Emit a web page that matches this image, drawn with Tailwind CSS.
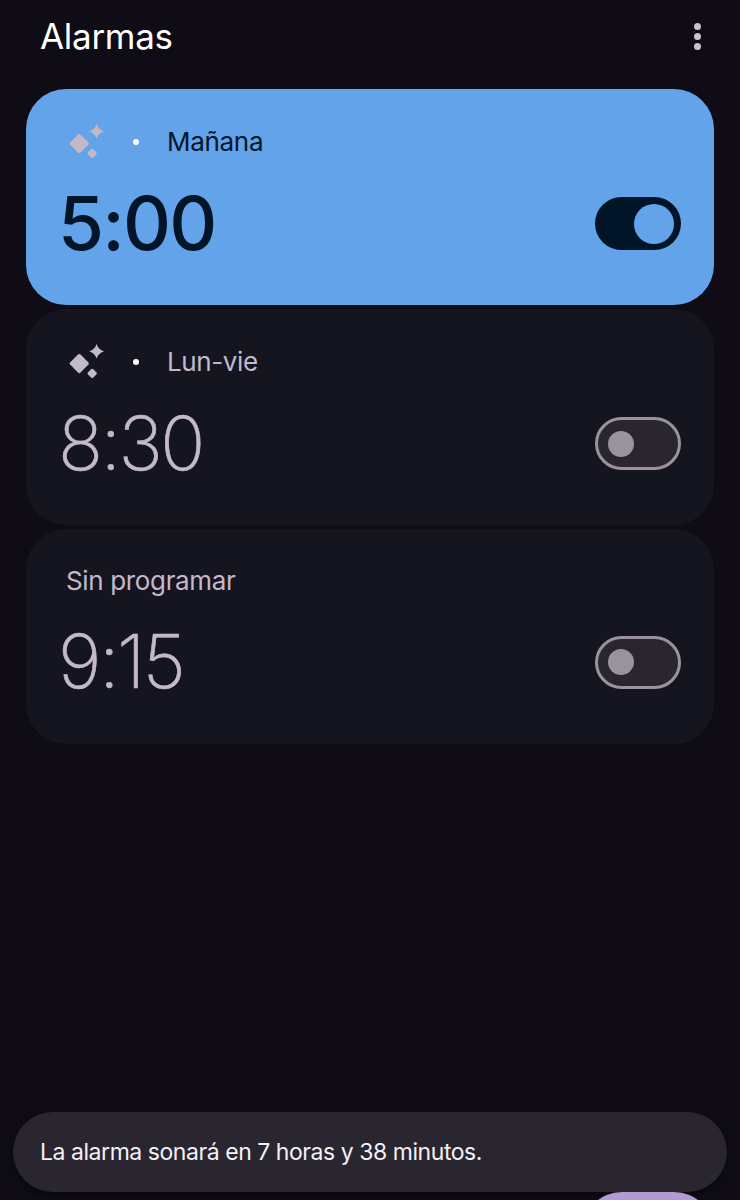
<!DOCTYPE html>
<html lang="es">
  <head>
    <meta charset="UTF-8" />
    <meta name="viewport" content="width=device-width, initial-scale=1.0" />
    <script src="https://cdn.jsdelivr.net/npm/@tailwindcss/browser@4"></script>
    <title>Alarmas</title>
  </head>
  <body
    class="relative h-screen overflow-hidden bg-[#0f0c15] font-['Inter',sans-serif]"
  >
    <header class="flex h-[89px] items-start justify-between pl-10 pr-[39.5px]">
      <h1 class="pt-4 text-[35px] leading-10 tracking-[-0.3px] text-white">
        Alarmas
      </h1>
      <button class="flex flex-col gap-[3px] pt-[23px]" aria-label="Más opciones">
        <span class="size-[7px] rounded-full bg-[#c9c2d2]"></span>
        <span class="size-[7px] rounded-full bg-[#c9c2d2]"></span>
        <span class="size-[7px] rounded-full bg-[#c9c2d2]"></span>
      </button>
    </header>

    <main class="flex flex-col gap-1 px-[26px]">
      <!-- active alarm -->
      <section
        class="flex h-[216px] flex-col rounded-[40px] bg-[#62a3ea] pt-[33px] pl-9 pr-[33px] text-[#001628]"
      >
        <div class="flex h-10 items-center">
          <svg class="ml-[7px] h-9 w-9 fill-[#c4b8c8]" viewBox="0 0 36 36">
            <rect x="3" y="12.300" width="14.500" height="14.500" rx="1.800" transform="rotate(45 10.250 19.550)" />
            <path d="M27.600 0Q29.400 5.500 35 7.300 29.400 9.100 27.600 14.600 25.800 9.100 20.200 7.300 25.800 5.500 27.600 0z" />
            <rect x="19.500" y="25.700" width="7.400" height="7.400" rx="1.600" transform="rotate(45 23.200 29.400)" />
          </svg>
          <span class="ml-7 size-[6px] rounded-full bg-white"></span>
          <span class="ml-7 text-[26px] leading-8 tracking-[-0.3px]">Mañana</span>
        </div>
        <div class="flex h-[123px] items-center justify-between">
          <time class="-mt-px -ml-1 text-[74.5px] leading-none font-medium tracking-[-1.800px]">5:00</time>
          <button
            class="flex h-[53px] w-[86px] items-center justify-end rounded-full bg-[#001628] pr-[7px]"
            role="switch"
            aria-checked="true"
          >
            <span class="size-10 rounded-full bg-[#62a3ea]"></span>
          </button>
        </div>
      </section>

      <section
        class="flex h-[216px] flex-col rounded-[40px] bg-[#15151f] pt-[33px] pl-9 pr-[33px] text-[#c4b8cc]"
      >
        <div class="flex h-10 items-center">
          <svg class="ml-[7px] h-9 w-9 fill-[#c4b8cc]" viewBox="0 0 36 36">
            <rect x="3" y="12.300" width="14.500" height="14.500" rx="1.800" transform="rotate(45 10.250 19.550)" />
            <path d="M27.600 0Q29.400 5.500 35 7.300 29.400 9.100 27.600 14.600 25.800 9.100 20.200 7.300 25.800 5.500 27.600 0z" />
            <rect x="19.500" y="25.700" width="7.400" height="7.400" rx="1.600" transform="rotate(45 23.200 29.400)" />
          </svg>
          <span class="ml-7 size-[6px] rounded-full bg-white"></span>
          <span class="ml-7 text-[26px] leading-8 tracking-[-0.4px]">Lun-vie</span>
        </div>
        <div class="flex h-[123px] items-center justify-between">
          <time class="-mt-px -ml-1 text-[74.5px] leading-none font-extralight tracking-[-2.500px] [-webkit-text-stroke:0.6px_#c4b8cc]">8:30</time>
          <button
            class="flex h-[53px] w-[86px] items-center rounded-full border-[3px] border-[#9a929f] bg-[#29262f] pl-[10px]"
            role="switch"
            aria-checked="false"
          >
            <span class="size-[26px] rounded-full bg-[#9a929f]"></span>
          </button>
        </div>
      </section>

      <section
        class="flex h-[215px] flex-col rounded-[40px] bg-[#15151f] pt-8 pl-9 pr-[33px] text-[#c4b8cc]"
      >
        <div class="flex h-10 items-center">
          <span class="ml-1 text-[26px] leading-8 tracking-[-0.35px]">Sin programar</span>
        </div>
        <div class="flex h-[122px] items-center justify-between">
          <time class="-mt-px -ml-1 text-[74.5px] leading-none font-extralight tracking-[-2.500px] [-webkit-text-stroke:0.6px_#c4b8cc]">9:15</time>
          <button
            class="flex h-[53px] w-[86px] items-center rounded-full border-[3px] border-[#9a929f] bg-[#29262f] pl-[10px]"
            role="switch"
            aria-checked="false"
          >
            <span class="size-[26px] rounded-full bg-[#9a929f]"></span>
          </button>
        </div>
      </section>
    </main>

    <!-- snackbar -->
    <div
      class="absolute top-[1112px] left-[13px] flex h-20 w-[714px] items-center rounded-full bg-[#29262f] pl-[27px] shadow-[0_4px_10px_rgba(0,0,0,0.4)]"
    >
      <p class="text-[23px] leading-8 tracking-[-0.45px] whitespace-nowrap text-[#f5eff7]">
        La alarma sonará en 7 horas y 38 minutos.
      </p>
    </div>

    <!-- top edge of the add button -->
    <div class="absolute bottom-0 left-[582px] h-2 w-[132px] overflow-hidden">
      <svg class="block h-2 w-[132px] fill-[#b39ad3]" viewBox="0 0 132 8">
        <rect width="132" height="132" rx="40" />
      </svg>
    </div>
  </body>
</html>
